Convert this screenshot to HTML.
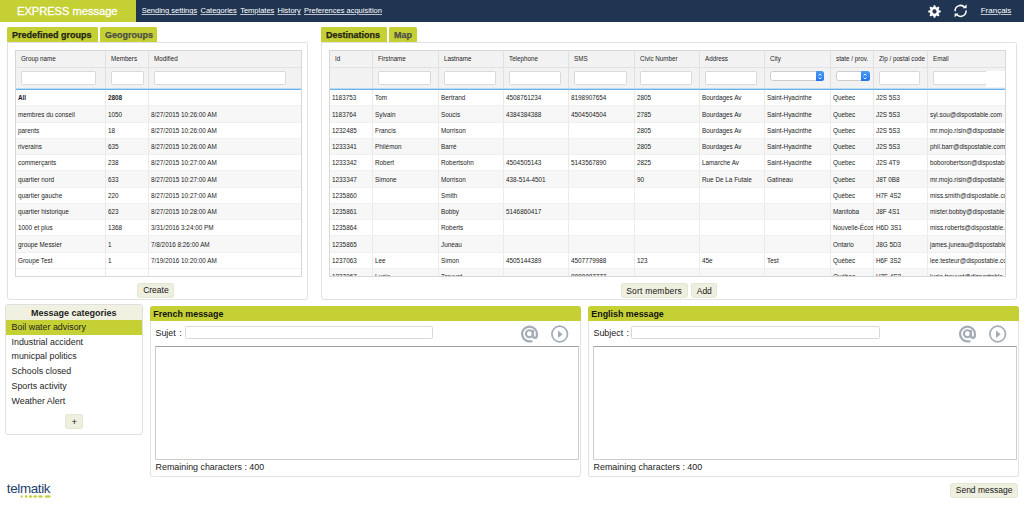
<!DOCTYPE html><html><head><meta charset="utf-8"><style>
*{box-sizing:border-box;margin:0;padding:0}
html,body{width:1024px;height:513px;overflow:hidden;background:#fff;font-family:"Liberation Sans",sans-serif;color:#222;position:relative}
.a{position:absolute}
.hdr{left:0;top:0;width:1024px;height:22px;background:#1f3552}
.logo{left:0;top:0;width:136px;height:22px;background:#c5d034;color:#fff;-webkit-text-stroke:0.3px #fff;font-size:11.1px;line-height:23.5px;padding-left:17px;white-space:nowrap}
.nav{color:#fff;font-size:7.5px;text-decoration:underline;text-decoration-color:rgba(255,255,255,0.7);white-space:nowrap;top:7px;line-height:8px}
.tab{height:15px;background:#c5d034;border-radius:1.5px 1.5px 0 0;-webkit-text-stroke:0.25px currentColor;font-weight:bold;font-size:9px;line-height:16.5px;white-space:nowrap;color:#242414;padding-left:5px}
.tab.off{color:#4e4e48}
.panel{border:1px solid #e2e2e2;border-radius:0 1.5px 3px 3px;background:#fff}
.tbl{border:1px solid #d7d7d7;background:#fff;overflow:hidden}
.th{background:#f0f0f0;height:39px;border-bottom:2px solid #5aa8e2}
.hrow{height:17px;border-bottom:1px solid #dedede}
.ht{font-size:7.2px;white-space:nowrap;color:#242424;top:3px;transform:scaleX(0.87);transform-origin:0 0}
.inp{background:#fff;border:1px solid #d9d9d9;height:13px;border-radius:1.5px}
.row{height:16.3px;border-bottom:1px solid #ececec;width:100%;left:0}
.row.g{background:#f6f6f6}
.cell{font-size:7.4px;white-space:nowrap;color:#1c1c1c;top:3.5px;transform:scaleX(0.86);transform-origin:0 0}
.vl{width:1px;background:#e6e6e6}
.btn{background:#efefe0;border-radius:3px;font-size:8.5px;color:#161616;box-shadow:inset 0 0 0 1px rgba(120,120,80,0.07);text-align:center;white-space:nowrap}
</style></head><body><div class="a hdr"></div>
<div class="a logo">EXPRESS message</div>
<div class="a nav" style="left:141.7px">Sending settings</div>
<div class="a nav" style="left:200.5px">Categories</div>
<div class="a nav" style="left:240.2px">Templates</div>
<div class="a nav" style="left:277.5px">History</div>
<div class="a nav" style="left:304px">Preferences acquisition</div>
<div class="a nav" style="left:980.7px;font-size:8px">Français</div>
<svg class="a" style="left:926.8px;top:3.5px" width="15" height="15" viewBox="0 0 15 15"><path fill="#fff" fill-rule="evenodd" d="M6.28 2.96 L6.67 1.20 L8.33 1.20 L8.72 2.96 L9.85 3.43 L11.37 2.46 L12.54 3.63 L11.57 5.15 L12.04 6.28 L13.80 6.67 L13.80 8.33 L12.04 8.72 L11.57 9.85 L12.54 11.37 L11.37 12.54 L9.85 11.57 L8.72 12.04 L8.33 13.80 L6.67 13.80 L6.28 12.04 L5.15 11.57 L3.63 12.54 L2.46 11.37 L3.43 9.85 L2.96 8.72 L1.20 8.33 L1.20 6.67 L2.96 6.28 L3.43 5.15 L2.46 3.63 L3.63 2.46 L5.15 3.43 Z M9.65 7.5 A2.15 2.15 0 1 0 5.35 7.5 A2.15 2.15 0 1 0 9.65 7.5 Z"/></svg>
<svg class="a" style="left:953px;top:3px" width="15" height="16" viewBox="0 0 15 16"><g fill="none" stroke="#fff" stroke-width="1.5">
<path d="M2.1 8.2 A5.5 5.5 0 0 1 11.6 4.2"/><path d="M13.1 7.4 A5.5 5.5 0 0 1 3.6 11.6"/></g>
<path d="M13.6 1.3 L13.6 5.2 L9.7 5.2 Z" fill="#fff"/><path d="M1.6 14.4 L1.6 10.5 L5.5 10.5 Z" fill="#fff"/></svg>
<div class="a tab" style="left:7px;top:27px;width:91px">Predefined groups</div>
<div class="a tab off" style="left:100px;top:27px;width:57px">Geogroups</div>
<div class="a panel" style="left:7px;top:42px;width:301px;height:258px"></div>
<div class="a tbl" style="left:15px;top:50px;width:287px;height:227px">
<div class="a" style="left:0;top:0;width:100%;height:37px;background:#f2f2f2"></div>
<div class="a" style="left:0;top:16px;width:100%;height:1px;background:#e2e2e2"></div>
<div class="a" style="left:0;top:37px;width:100%;height:1px;background:#b9dcf4"></div>
<div class="a" style="left:0;top:38px;width:100%;height:1px;background:#6ab3e8"></div>
<div class="a" style="left:0;width:100%;top:39.00px;height:16.25px;border-bottom:1px solid #f1f1f1"></div>
<div class="a" style="left:0;width:100%;top:55.25px;height:16.25px;background:#f7f7f7;border-bottom:1px solid #f1f1f1"></div>
<div class="a" style="left:0;width:100%;top:71.50px;height:16.25px;border-bottom:1px solid #f1f1f1"></div>
<div class="a" style="left:0;width:100%;top:87.75px;height:16.25px;background:#f7f7f7;border-bottom:1px solid #f1f1f1"></div>
<div class="a" style="left:0;width:100%;top:104.00px;height:16.25px;border-bottom:1px solid #f1f1f1"></div>
<div class="a" style="left:0;width:100%;top:120.25px;height:16.25px;background:#f7f7f7;border-bottom:1px solid #f1f1f1"></div>
<div class="a" style="left:0;width:100%;top:136.50px;height:16.25px;border-bottom:1px solid #f1f1f1"></div>
<div class="a" style="left:0;width:100%;top:152.75px;height:16.25px;background:#f7f7f7;border-bottom:1px solid #f1f1f1"></div>
<div class="a" style="left:0;width:100%;top:169.00px;height:16.25px;border-bottom:1px solid #f1f1f1"></div>
<div class="a" style="left:0;width:100%;top:185.25px;height:16.25px;background:#f7f7f7;border-bottom:1px solid #f1f1f1"></div>
<div class="a" style="left:0;width:100%;top:201.50px;height:16.25px;border-bottom:1px solid #f1f1f1"></div>
<div class="a" style="left:0;top:37px;width:100%;height:1px;background:#b9dcf4"></div>
<div class="a" style="left:0;top:38px;width:100%;height:1px;background:#6ab3e8"></div>
<div class="a cell" style="left:1.5px;top:42.45px;width:101.2px;overflow:hidden;font-weight:bold;">All</div>
<div class="a cell" style="left:91.5px;top:42.45px;width:46.5px;overflow:hidden;font-weight:bold;">2808</div>
<div class="a cell" style="left:1.5px;top:58.70px;width:101.2px;overflow:hidden;">membres du conseil</div>
<div class="a cell" style="left:91.5px;top:58.70px;width:46.5px;overflow:hidden;">1050</div>
<div class="a cell" style="left:134.5px;top:58.70px;width:2150.0px;overflow:hidden;">8/27/2015 10:26:00 AM</div>
<div class="a cell" style="left:1.5px;top:74.95px;width:101.2px;overflow:hidden;">parents</div>
<div class="a cell" style="left:91.5px;top:74.95px;width:46.5px;overflow:hidden;">18</div>
<div class="a cell" style="left:134.5px;top:74.95px;width:2150.0px;overflow:hidden;">8/27/2015 10:26:00 AM</div>
<div class="a cell" style="left:1.5px;top:91.20px;width:101.2px;overflow:hidden;">riverains</div>
<div class="a cell" style="left:91.5px;top:91.20px;width:46.5px;overflow:hidden;">635</div>
<div class="a cell" style="left:134.5px;top:91.20px;width:2150.0px;overflow:hidden;">8/27/2015 10:26:00 AM</div>
<div class="a cell" style="left:1.5px;top:107.45px;width:101.2px;overflow:hidden;">commerçants</div>
<div class="a cell" style="left:91.5px;top:107.45px;width:46.5px;overflow:hidden;">238</div>
<div class="a cell" style="left:134.5px;top:107.45px;width:2150.0px;overflow:hidden;">8/27/2015 10:27:00 AM</div>
<div class="a cell" style="left:1.5px;top:123.70px;width:101.2px;overflow:hidden;">quartier nord</div>
<div class="a cell" style="left:91.5px;top:123.70px;width:46.5px;overflow:hidden;">633</div>
<div class="a cell" style="left:134.5px;top:123.70px;width:2150.0px;overflow:hidden;">8/27/2015 10:27:00 AM</div>
<div class="a cell" style="left:1.5px;top:139.95px;width:101.2px;overflow:hidden;">quartier gauche</div>
<div class="a cell" style="left:91.5px;top:139.95px;width:46.5px;overflow:hidden;">220</div>
<div class="a cell" style="left:134.5px;top:139.95px;width:2150.0px;overflow:hidden;">8/27/2015 10:27:00 AM</div>
<div class="a cell" style="left:1.5px;top:156.20px;width:101.2px;overflow:hidden;">quartier historique</div>
<div class="a cell" style="left:91.5px;top:156.20px;width:46.5px;overflow:hidden;">623</div>
<div class="a cell" style="left:134.5px;top:156.20px;width:2150.0px;overflow:hidden;">8/27/2015 10:28:00 AM</div>
<div class="a cell" style="left:1.5px;top:172.45px;width:101.2px;overflow:hidden;">1000 et plus</div>
<div class="a cell" style="left:91.5px;top:172.45px;width:46.5px;overflow:hidden;">1368</div>
<div class="a cell" style="left:134.5px;top:172.45px;width:2150.0px;overflow:hidden;">3/31/2016 3:24:00 PM</div>
<div class="a cell" style="left:1.5px;top:188.70px;width:101.2px;overflow:hidden;">groupe Messier</div>
<div class="a cell" style="left:91.5px;top:188.70px;width:46.5px;overflow:hidden;">1</div>
<div class="a cell" style="left:134.5px;top:188.70px;width:2150.0px;overflow:hidden;">7/8/2016 8:26:00 AM</div>
<div class="a cell" style="left:1.5px;top:204.95px;width:101.2px;overflow:hidden;">Groupe Test</div>
<div class="a cell" style="left:91.5px;top:204.95px;width:46.5px;overflow:hidden;">1</div>
<div class="a cell" style="left:134.5px;top:204.95px;width:2150.0px;overflow:hidden;">7/19/2016 10:20:00 AM</div>
<div class="a vl" style="left:89px;top:0;height:37px;background:#e0e0e0"></div>
<div class="a vl" style="left:89px;top:39px;height:227px;background:#ebebeb"></div>
<div class="a vl" style="left:132px;top:0;height:37px;background:#e0e0e0"></div>
<div class="a vl" style="left:132px;top:39px;height:227px;background:#ebebeb"></div>
<div class="a ht" style="left:4.5px;top:3px">Group name</div>
<div class="a ht" style="left:94.5px;top:3px">Members</div>
<div class="a ht" style="left:137.5px;top:3px">Modified</div>
<div class="a inp" style="left:5.2px;top:20.0px;width:75.3px;height:13.5px"></div>
<div class="a inp" style="left:95.0px;top:20.0px;width:33.4px;height:13.5px"></div>
<div class="a inp" style="left:138.4px;top:20.0px;width:131.2px;height:13.5px"></div>

</div>
<div class="a btn" style="left:137.3px;top:282.5px;width:37.2px;height:15.2px;line-height:15.6px">Create</div>
<div class="a tab" style="left:321px;top:27px;width:66px">Destinations</div>
<div class="a tab off" style="left:389px;top:27px;width:28px">Map</div>
<div class="a panel" style="left:321px;top:42px;width:696px;height:258px"></div>
<div class="a tbl" style="left:329px;top:50px;width:677px;height:227px">
<div class="a" style="left:0;top:0;width:100%;height:37px;background:#f2f2f2"></div>
<div class="a" style="left:0;top:16px;width:100%;height:1px;background:#e2e2e2"></div>
<div class="a" style="left:0;top:37px;width:100%;height:1px;background:#b9dcf4"></div>
<div class="a" style="left:0;top:38px;width:100%;height:1px;background:#6ab3e8"></div>
<div class="a" style="left:0;width:100%;top:39.00px;height:16.25px;border-bottom:1px solid #f1f1f1"></div>
<div class="a" style="left:0;width:100%;top:55.25px;height:16.25px;background:#f7f7f7;border-bottom:1px solid #f1f1f1"></div>
<div class="a" style="left:0;width:100%;top:71.50px;height:16.25px;border-bottom:1px solid #f1f1f1"></div>
<div class="a" style="left:0;width:100%;top:87.75px;height:16.25px;background:#f7f7f7;border-bottom:1px solid #f1f1f1"></div>
<div class="a" style="left:0;width:100%;top:104.00px;height:16.25px;border-bottom:1px solid #f1f1f1"></div>
<div class="a" style="left:0;width:100%;top:120.25px;height:16.25px;background:#f7f7f7;border-bottom:1px solid #f1f1f1"></div>
<div class="a" style="left:0;width:100%;top:136.50px;height:16.25px;border-bottom:1px solid #f1f1f1"></div>
<div class="a" style="left:0;width:100%;top:152.75px;height:16.25px;background:#f7f7f7;border-bottom:1px solid #f1f1f1"></div>
<div class="a" style="left:0;width:100%;top:169.00px;height:16.25px;border-bottom:1px solid #f1f1f1"></div>
<div class="a" style="left:0;width:100%;top:185.25px;height:16.25px;background:#f7f7f7;border-bottom:1px solid #f1f1f1"></div>
<div class="a" style="left:0;width:100%;top:201.50px;height:16.25px;border-bottom:1px solid #f1f1f1"></div>
<div class="a" style="left:0;width:100%;top:217.75px;height:16.25px;background:#f7f7f7;border-bottom:1px solid #f1f1f1"></div>
<div class="a" style="left:0;top:37px;width:100%;height:1px;background:#b9dcf4"></div>
<div class="a" style="left:0;top:38px;width:100%;height:1px;background:#6ab3e8"></div>
<div class="a cell" style="left:1.5px;top:42.45px;width:46.5px;overflow:hidden;">1183753</div>
<div class="a cell" style="left:44.5px;top:42.45px;width:73.3px;overflow:hidden;">Tom</div>
<div class="a cell" style="left:110.5px;top:42.45px;width:72.1px;overflow:hidden;">Bertrand</div>
<div class="a cell" style="left:175.5px;top:42.45px;width:72.1px;overflow:hidden;">4508761234</div>
<div class="a cell" style="left:240.5px;top:42.45px;width:73.3px;overflow:hidden;">8198907654</div>
<div class="a cell" style="left:306.5px;top:42.45px;width:72.1px;overflow:hidden;">2805</div>
<div class="a cell" style="left:371.5px;top:42.45px;width:72.1px;overflow:hidden;">Bourdages Av</div>
<div class="a cell" style="left:436.5px;top:42.45px;width:73.3px;overflow:hidden;">Saint-Hyacinthe</div>
<div class="a cell" style="left:502.5px;top:42.45px;width:46.5px;overflow:hidden;">Quebec</div>
<div class="a cell" style="left:545.5px;top:42.45px;width:59.3px;overflow:hidden;">J2S 5S3</div>
<div class="a cell" style="left:1.5px;top:58.70px;width:46.5px;overflow:hidden;">1183764</div>
<div class="a cell" style="left:44.5px;top:58.70px;width:73.3px;overflow:hidden;">Sylvain</div>
<div class="a cell" style="left:110.5px;top:58.70px;width:72.1px;overflow:hidden;">Soucis</div>
<div class="a cell" style="left:175.5px;top:58.70px;width:72.1px;overflow:hidden;">4384384388</div>
<div class="a cell" style="left:240.5px;top:58.70px;width:73.3px;overflow:hidden;">4504504504</div>
<div class="a cell" style="left:306.5px;top:58.70px;width:72.1px;overflow:hidden;">2785</div>
<div class="a cell" style="left:371.5px;top:58.70px;width:72.1px;overflow:hidden;">Bourdages Av</div>
<div class="a cell" style="left:436.5px;top:58.70px;width:73.3px;overflow:hidden;">Saint-Hyacinthe</div>
<div class="a cell" style="left:502.5px;top:58.70px;width:46.5px;overflow:hidden;">Quebec</div>
<div class="a cell" style="left:545.5px;top:58.70px;width:59.3px;overflow:hidden;">J2S 5S3</div>
<div class="a cell" style="left:599.5px;top:58.70px;width:1244.2px;overflow:hidden;">syl.sou@dispostable.com</div>
<div class="a cell" style="left:1.5px;top:74.95px;width:46.5px;overflow:hidden;">1232485</div>
<div class="a cell" style="left:44.5px;top:74.95px;width:73.3px;overflow:hidden;">Francis</div>
<div class="a cell" style="left:110.5px;top:74.95px;width:72.1px;overflow:hidden;">Morrison</div>
<div class="a cell" style="left:306.5px;top:74.95px;width:72.1px;overflow:hidden;">2805</div>
<div class="a cell" style="left:371.5px;top:74.95px;width:72.1px;overflow:hidden;">Bourdages Av</div>
<div class="a cell" style="left:436.5px;top:74.95px;width:73.3px;overflow:hidden;">Saint-Hyacinthe</div>
<div class="a cell" style="left:502.5px;top:74.95px;width:46.5px;overflow:hidden;">Quebec</div>
<div class="a cell" style="left:545.5px;top:74.95px;width:59.3px;overflow:hidden;">J2S 5S3</div>
<div class="a cell" style="left:599.5px;top:74.95px;width:1244.2px;overflow:hidden;">mr.mojo.risin@dispostable.com</div>
<div class="a cell" style="left:1.5px;top:91.20px;width:46.5px;overflow:hidden;">1233341</div>
<div class="a cell" style="left:44.5px;top:91.20px;width:73.3px;overflow:hidden;">Philémon</div>
<div class="a cell" style="left:110.5px;top:91.20px;width:72.1px;overflow:hidden;">Barré</div>
<div class="a cell" style="left:306.5px;top:91.20px;width:72.1px;overflow:hidden;">2805</div>
<div class="a cell" style="left:371.5px;top:91.20px;width:72.1px;overflow:hidden;">Bourdages Av</div>
<div class="a cell" style="left:436.5px;top:91.20px;width:73.3px;overflow:hidden;">Saint-Hyacinthe</div>
<div class="a cell" style="left:502.5px;top:91.20px;width:46.5px;overflow:hidden;">Quebec</div>
<div class="a cell" style="left:545.5px;top:91.20px;width:59.3px;overflow:hidden;">J2S 5S3</div>
<div class="a cell" style="left:599.5px;top:91.20px;width:1244.2px;overflow:hidden;">phil.barr@dispostable.com</div>
<div class="a cell" style="left:1.5px;top:107.45px;width:46.5px;overflow:hidden;">1233342</div>
<div class="a cell" style="left:44.5px;top:107.45px;width:73.3px;overflow:hidden;">Robert</div>
<div class="a cell" style="left:110.5px;top:107.45px;width:72.1px;overflow:hidden;">Robertsohn</div>
<div class="a cell" style="left:175.5px;top:107.45px;width:72.1px;overflow:hidden;">4504505143</div>
<div class="a cell" style="left:240.5px;top:107.45px;width:73.3px;overflow:hidden;">5143567890</div>
<div class="a cell" style="left:306.5px;top:107.45px;width:72.1px;overflow:hidden;">2825</div>
<div class="a cell" style="left:371.5px;top:107.45px;width:72.1px;overflow:hidden;">Lamarche Av</div>
<div class="a cell" style="left:436.5px;top:107.45px;width:73.3px;overflow:hidden;">Saint-Hyacinthe</div>
<div class="a cell" style="left:502.5px;top:107.45px;width:46.5px;overflow:hidden;">Quebec</div>
<div class="a cell" style="left:545.5px;top:107.45px;width:59.3px;overflow:hidden;">J2S 4T9</div>
<div class="a cell" style="left:599.5px;top:107.45px;width:1244.2px;overflow:hidden;">boborobertson@dispostable.com</div>
<div class="a cell" style="left:1.5px;top:123.70px;width:46.5px;overflow:hidden;">1233347</div>
<div class="a cell" style="left:44.5px;top:123.70px;width:73.3px;overflow:hidden;">Simone</div>
<div class="a cell" style="left:110.5px;top:123.70px;width:72.1px;overflow:hidden;">Morrison</div>
<div class="a cell" style="left:175.5px;top:123.70px;width:72.1px;overflow:hidden;">438-514-4501</div>
<div class="a cell" style="left:306.5px;top:123.70px;width:72.1px;overflow:hidden;">90</div>
<div class="a cell" style="left:371.5px;top:123.70px;width:72.1px;overflow:hidden;">Rue De La Futaie</div>
<div class="a cell" style="left:436.5px;top:123.70px;width:73.3px;overflow:hidden;">Gatineau</div>
<div class="a cell" style="left:502.5px;top:123.70px;width:46.5px;overflow:hidden;">Quebec</div>
<div class="a cell" style="left:545.5px;top:123.70px;width:59.3px;overflow:hidden;">J8T 0B8</div>
<div class="a cell" style="left:599.5px;top:123.70px;width:1244.2px;overflow:hidden;">mr.mojo.risin@dispostable.com</div>
<div class="a cell" style="left:1.5px;top:139.95px;width:46.5px;overflow:hidden;">1235860</div>
<div class="a cell" style="left:110.5px;top:139.95px;width:72.1px;overflow:hidden;">Smith</div>
<div class="a cell" style="left:502.5px;top:139.95px;width:46.5px;overflow:hidden;">Québec</div>
<div class="a cell" style="left:545.5px;top:139.95px;width:59.3px;overflow:hidden;">H7F 4S2</div>
<div class="a cell" style="left:599.5px;top:139.95px;width:1244.2px;overflow:hidden;">miss.smith@dispostable.com</div>
<div class="a cell" style="left:1.5px;top:156.20px;width:46.5px;overflow:hidden;">1235861</div>
<div class="a cell" style="left:110.5px;top:156.20px;width:72.1px;overflow:hidden;">Bobby</div>
<div class="a cell" style="left:175.5px;top:156.20px;width:72.1px;overflow:hidden;">5146860417</div>
<div class="a cell" style="left:502.5px;top:156.20px;width:46.5px;overflow:hidden;">Manitoba</div>
<div class="a cell" style="left:545.5px;top:156.20px;width:59.3px;overflow:hidden;">J8F 4S1</div>
<div class="a cell" style="left:599.5px;top:156.20px;width:1244.2px;overflow:hidden;">mister.bobby@dispostable.com</div>
<div class="a cell" style="left:1.5px;top:172.45px;width:46.5px;overflow:hidden;">1235864</div>
<div class="a cell" style="left:110.5px;top:172.45px;width:72.1px;overflow:hidden;">Roberts</div>
<div class="a cell" style="left:502.5px;top:172.45px;width:46.5px;overflow:hidden;">Nouvelle-Écosse</div>
<div class="a cell" style="left:545.5px;top:172.45px;width:59.3px;overflow:hidden;">H6D 3S1</div>
<div class="a cell" style="left:599.5px;top:172.45px;width:1244.2px;overflow:hidden;">miss.roberts@dispostable.com</div>
<div class="a cell" style="left:1.5px;top:188.70px;width:46.5px;overflow:hidden;">1235865</div>
<div class="a cell" style="left:110.5px;top:188.70px;width:72.1px;overflow:hidden;">Juneau</div>
<div class="a cell" style="left:502.5px;top:188.70px;width:46.5px;overflow:hidden;">Ontario</div>
<div class="a cell" style="left:545.5px;top:188.70px;width:59.3px;overflow:hidden;">J8G 5D3</div>
<div class="a cell" style="left:599.5px;top:188.70px;width:1244.2px;overflow:hidden;">james.juneau@dispostable.com</div>
<div class="a cell" style="left:1.5px;top:204.95px;width:46.5px;overflow:hidden;">1237063</div>
<div class="a cell" style="left:44.5px;top:204.95px;width:73.3px;overflow:hidden;">Lee</div>
<div class="a cell" style="left:110.5px;top:204.95px;width:72.1px;overflow:hidden;">Simon</div>
<div class="a cell" style="left:175.5px;top:204.95px;width:72.1px;overflow:hidden;">4505144389</div>
<div class="a cell" style="left:240.5px;top:204.95px;width:73.3px;overflow:hidden;">4507779988</div>
<div class="a cell" style="left:306.5px;top:204.95px;width:72.1px;overflow:hidden;">123</div>
<div class="a cell" style="left:371.5px;top:204.95px;width:72.1px;overflow:hidden;">45e</div>
<div class="a cell" style="left:436.5px;top:204.95px;width:73.3px;overflow:hidden;">Test</div>
<div class="a cell" style="left:502.5px;top:204.95px;width:46.5px;overflow:hidden;">Québec</div>
<div class="a cell" style="left:545.5px;top:204.95px;width:59.3px;overflow:hidden;">H6F 3S2</div>
<div class="a cell" style="left:599.5px;top:204.95px;width:1244.2px;overflow:hidden;">lee.testeur@dispostable.com</div>
<div class="a cell" style="left:1.5px;top:221.20px;width:46.5px;overflow:hidden;">1237067</div>
<div class="a cell" style="left:44.5px;top:221.20px;width:73.3px;overflow:hidden;">Lucie</div>
<div class="a cell" style="left:110.5px;top:221.20px;width:72.1px;overflow:hidden;">Trouvet</div>
<div class="a cell" style="left:240.5px;top:221.20px;width:73.3px;overflow:hidden;">8888887777</div>
<div class="a cell" style="left:502.5px;top:221.20px;width:46.5px;overflow:hidden;">Québec</div>
<div class="a cell" style="left:545.5px;top:221.20px;width:59.3px;overflow:hidden;">H7F 4S2</div>
<div class="a cell" style="left:599.5px;top:221.20px;width:1244.2px;overflow:hidden;">lucie.trouvet@dispostable.com</div>
<div class="a vl" style="left:42px;top:0;height:37px;background:#e0e0e0"></div>
<div class="a vl" style="left:42px;top:39px;height:227px;background:#ebebeb"></div>
<div class="a vl" style="left:108px;top:0;height:37px;background:#e0e0e0"></div>
<div class="a vl" style="left:108px;top:39px;height:227px;background:#ebebeb"></div>
<div class="a vl" style="left:173px;top:0;height:37px;background:#e0e0e0"></div>
<div class="a vl" style="left:173px;top:39px;height:227px;background:#ebebeb"></div>
<div class="a vl" style="left:238px;top:0;height:37px;background:#e0e0e0"></div>
<div class="a vl" style="left:238px;top:39px;height:227px;background:#ebebeb"></div>
<div class="a vl" style="left:304px;top:0;height:37px;background:#e0e0e0"></div>
<div class="a vl" style="left:304px;top:39px;height:227px;background:#ebebeb"></div>
<div class="a vl" style="left:369px;top:0;height:37px;background:#e0e0e0"></div>
<div class="a vl" style="left:369px;top:39px;height:227px;background:#ebebeb"></div>
<div class="a vl" style="left:434px;top:0;height:37px;background:#e0e0e0"></div>
<div class="a vl" style="left:434px;top:39px;height:227px;background:#ebebeb"></div>
<div class="a vl" style="left:500px;top:0;height:37px;background:#e0e0e0"></div>
<div class="a vl" style="left:500px;top:39px;height:227px;background:#ebebeb"></div>
<div class="a vl" style="left:543px;top:0;height:37px;background:#e0e0e0"></div>
<div class="a vl" style="left:543px;top:39px;height:227px;background:#ebebeb"></div>
<div class="a vl" style="left:597px;top:0;height:37px;background:#e0e0e0"></div>
<div class="a vl" style="left:597px;top:39px;height:227px;background:#ebebeb"></div>
<div class="a ht" style="left:4.5px;top:3px">Id</div>
<div class="a ht" style="left:47.5px;top:3px">Firstname</div>
<div class="a ht" style="left:113.5px;top:3px">Lastname</div>
<div class="a ht" style="left:178.5px;top:3px">Telephone</div>
<div class="a ht" style="left:243.5px;top:3px">SMS</div>
<div class="a ht" style="left:309.5px;top:3px">Civic Number</div>
<div class="a ht" style="left:374.5px;top:3px">Address</div>
<div class="a ht" style="left:439.5px;top:3px">City</div>
<div class="a ht" style="left:505.5px;top:3px">state / prov.</div>
<div class="a ht" style="left:548.5px;top:3px">Zip / postal code</div>
<div class="a ht" style="left:602.5px;top:3px">Email</div>
<div class="a inp" style="left:48.3px;top:20.0px;width:53.2px;height:13.5px"></div>
<div class="a inp" style="left:114.3px;top:20.0px;width:52.2px;height:13.5px"></div>
<div class="a inp" style="left:179.3px;top:20.0px;width:52.2px;height:13.5px"></div>
<div class="a inp" style="left:244.3px;top:20.0px;width:53.2px;height:13.5px"></div>
<div class="a inp" style="left:310.3px;top:20.0px;width:52.2px;height:13.5px"></div>
<div class="a inp" style="left:375.3px;top:20.0px;width:52.2px;height:13.5px"></div>
<div class="a inp" style="left:549.3px;top:20.0px;width:41.2px;height:13.5px"></div>
<div class="a inp" style="left:603.3px;top:20.0px;width:65.2px;height:13.5px"></div>
<div class="a inp" style="left:603.2px;top:20.0px;width:80.0px;height:13.5px"></div>
<div class="a" style="left:440.4px;top:20.2px;width:53.6px;height:9.5px;border:1px solid #cdcdcd;border-radius:2.5px;background:#fff"></div><div class="a" style="left:486.1px;top:20.2px;width:7.9px;height:9.5px;background:linear-gradient(#4d9cf6,#1f74ee);border-radius:0 2.5px 2.5px 0"></div><svg class="a" style="left:488.1px;top:21.5px" width="4" height="7" viewBox="0 0 4 7"><path d="M0.6 2.6 L2 1 L3.4 2.6 M0.6 4.4 L2 6 L3.4 4.4" fill="none" stroke="#fff" stroke-width="0.9"/></svg><div class="a" style="left:505.6px;top:20.2px;width:33.9px;height:9.5px;border:1px solid #cdcdcd;border-radius:2.5px;background:#fff"></div><div class="a" style="left:531.0px;top:20.2px;width:8.5px;height:9.5px;background:linear-gradient(#4d9cf6,#1f74ee);border-radius:0 2.5px 2.5px 0"></div><svg class="a" style="left:533.2px;top:21.5px" width="4" height="7" viewBox="0 0 4 7"><path d="M0.6 2.6 L2 1 L3.4 2.6 M0.6 4.4 L2 6 L3.4 4.4" fill="none" stroke="#fff" stroke-width="0.9"/></svg><div class="a" style="left:656px;top:20px;width:20px;height:16px;background:#fff"></div>
</div>
<div class="a btn" style="left:620.6px;top:282.5px;width:67px;height:15.2px;line-height:16.8px;letter-spacing:0.2px">Sort members</div>
<div class="a btn" style="left:691.2px;top:282.5px;width:26.2px;height:15.2px;line-height:16.8px">Add</div>
<div class="a" style="left:5px;top:304px;width:137.5px;height:130.5px;border:1px solid #e0e0e0;border-radius:3px;background:#fff;overflow:hidden">
<div class="a" style="left:0;top:0;width:100%;height:15px;background:#f1f1e2;font-weight:bold;font-size:9px;text-align:center;line-height:16.5px;color:#1e1e1e">Message categories</div>
<div class="a" style="left:0;top:15.0px;width:100%;height:14.5px;background:#c5d034;font-size:8.9px;line-height:14.5px;padding-left:5.5px;color:#1e1e1e">Boil water advisory</div>
<div class="a" style="left:0;top:29.7px;width:100%;height:14.5px;font-size:8.9px;line-height:14.5px;padding-left:5.5px;color:#1e1e1e">Industrial accident</div>
<div class="a" style="left:0;top:44.4px;width:100%;height:14.5px;font-size:8.9px;line-height:14.5px;padding-left:5.5px;color:#1e1e1e">municpal politics</div>
<div class="a" style="left:0;top:59.1px;width:100%;height:14.5px;font-size:8.9px;line-height:14.5px;padding-left:5.5px;color:#1e1e1e">Schools closed</div>
<div class="a" style="left:0;top:73.8px;width:100%;height:14.5px;font-size:8.9px;line-height:14.5px;padding-left:5.5px;color:#1e1e1e">Sports activity</div>
<div class="a" style="left:0;top:88.5px;width:100%;height:14.5px;font-size:8.9px;line-height:14.5px;padding-left:5.5px;color:#1e1e1e">Weather Alert</div>
<div class="a btn" style="left:59.4px;top:108.5px;width:17.6px;height:15.3px;line-height:15.6px;font-size:9.5px">+</div>
</div>
<div class="a" style="left:150px;top:306px;width:431px;height:170.8px;border:1px solid #e3e3e3;border-top:none;border-radius:3px;background:#fff"></div>
<div class="a" style="left:150px;top:306px;width:431px;height:14.8px;background:#c5d034;border-radius:3px 3px 0 0;font-weight:bold;font-size:8.9px;line-height:16.5px;padding-left:3.3px;color:#111;white-space:nowrap">French message</div>
<div class="a" style="left:155.5px;top:328px;font-size:8.9px;color:#222;white-space:nowrap;word-spacing:1px">Sujet :</div>
<div class="a inp" style="left:185px;top:326.2px;width:248px;height:12.6px;border-color:#d9d9d9"></div>
<div class="a" style="left:155.2px;top:345.8px;width:423.6px;height:113.8px;border:1px solid #cdcdcd;border-top-color:#a0a0a0;border-radius:0 0 1.5px 1.5px;background:#fff"></div>
<div class="a" style="left:155.6px;top:461.6px;font-size:8.9px;color:#222;white-space:nowrap">Remaining characters : 400</div>
<svg class="a" style="left:520px;top:324.5px" width="20" height="19" viewBox="0 0 20 19"><g fill="none" stroke="#a4adb7" stroke-width="2.3">
<circle cx="9.4" cy="8.8" r="3.5" stroke-width="2.1"/><path d="M12.4 16.4 H9.5 A7.4 7.4 0 1 1 16.9 9 V10.3 Q16.9 12.9 14.9 12.9 Q12.9 12.9 12.9 10.3 V5"/></g></svg>
<svg class="a" style="left:550px;top:324.5px" width="20" height="19" viewBox="0 0 20 19"><circle cx="9.7" cy="9" r="7.8" fill="none" stroke="#a4adb7" stroke-width="1.7"/><path d="M8 5.5 L12.7 9.3 L8 13.1 Z" fill="#a4adb7"/></svg>
<div class="a" style="left:588px;top:306px;width:430.5px;height:170.8px;border:1px solid #e3e3e3;border-top:none;border-radius:3px;background:#fff"></div>
<div class="a" style="left:588px;top:306px;width:430.5px;height:14.8px;background:#c5d034;border-radius:3px 3px 0 0;font-weight:bold;font-size:8.9px;line-height:16.5px;padding-left:3.3px;color:#111;white-space:nowrap">English message</div>
<div class="a" style="left:593.5px;top:328px;font-size:8.9px;color:#222;white-space:nowrap;word-spacing:1px">Subject :</div>
<div class="a inp" style="left:631.4px;top:326.2px;width:249px;height:12.6px;border-color:#d9d9d9"></div>
<div class="a" style="left:593.2px;top:345.8px;width:424.1px;height:113.8px;border:1px solid #cdcdcd;border-top-color:#a0a0a0;border-radius:0 0 1.5px 1.5px;background:#fff"></div>
<div class="a" style="left:593.6px;top:461.6px;font-size:8.9px;color:#222;white-space:nowrap">Remaining characters : 400</div>
<svg class="a" style="left:957.5px;top:324.5px" width="20" height="19" viewBox="0 0 20 19"><g fill="none" stroke="#a4adb7" stroke-width="2.3">
<circle cx="9.4" cy="8.8" r="3.5" stroke-width="2.1"/><path d="M12.4 16.4 H9.5 A7.4 7.4 0 1 1 16.9 9 V10.3 Q16.9 12.9 14.9 12.9 Q12.9 12.9 12.9 10.3 V5"/></g></svg>
<svg class="a" style="left:987.5px;top:324.5px" width="20" height="19" viewBox="0 0 20 19"><circle cx="9.7" cy="9" r="7.8" fill="none" stroke="#a4adb7" stroke-width="1.7"/><path d="M8 5.5 L12.7 9.3 L8 13.1 Z" fill="#a4adb7"/></svg>
<div class="a btn" style="left:949.7px;top:482.6px;width:68.8px;height:15.3px;line-height:15.3px;font-size:8.5px">Send message</div>
<div class="a" style="left:6.8px;top:481.3px;font-size:13.4px;color:#24406b;letter-spacing:-0.35px;white-space:nowrap">telmatik</div>
<svg class="a" style="left:0;top:494px" width="60" height="5" viewBox="0 0 60 5"><ellipse cx="21.7" cy="2.6" rx="1.0" ry="1.25" fill="#c3cf3a"/><ellipse cx="26.1" cy="2.6" rx="1.3" ry="1.25" fill="#c3cf3a"/><ellipse cx="30.5" cy="2.6" rx="1.6" ry="1.25" fill="#c3cf3a"/><ellipse cx="35.1" cy="2.6" rx="1.9" ry="1.25" fill="#c3cf3a"/><ellipse cx="40.4" cy="2.6" rx="2.4" ry="1.25" fill="#c3cf3a"/><ellipse cx="47.7" cy="2.6" rx="3.1" ry="1.25" fill="#c3cf3a"/></svg></body></html>
